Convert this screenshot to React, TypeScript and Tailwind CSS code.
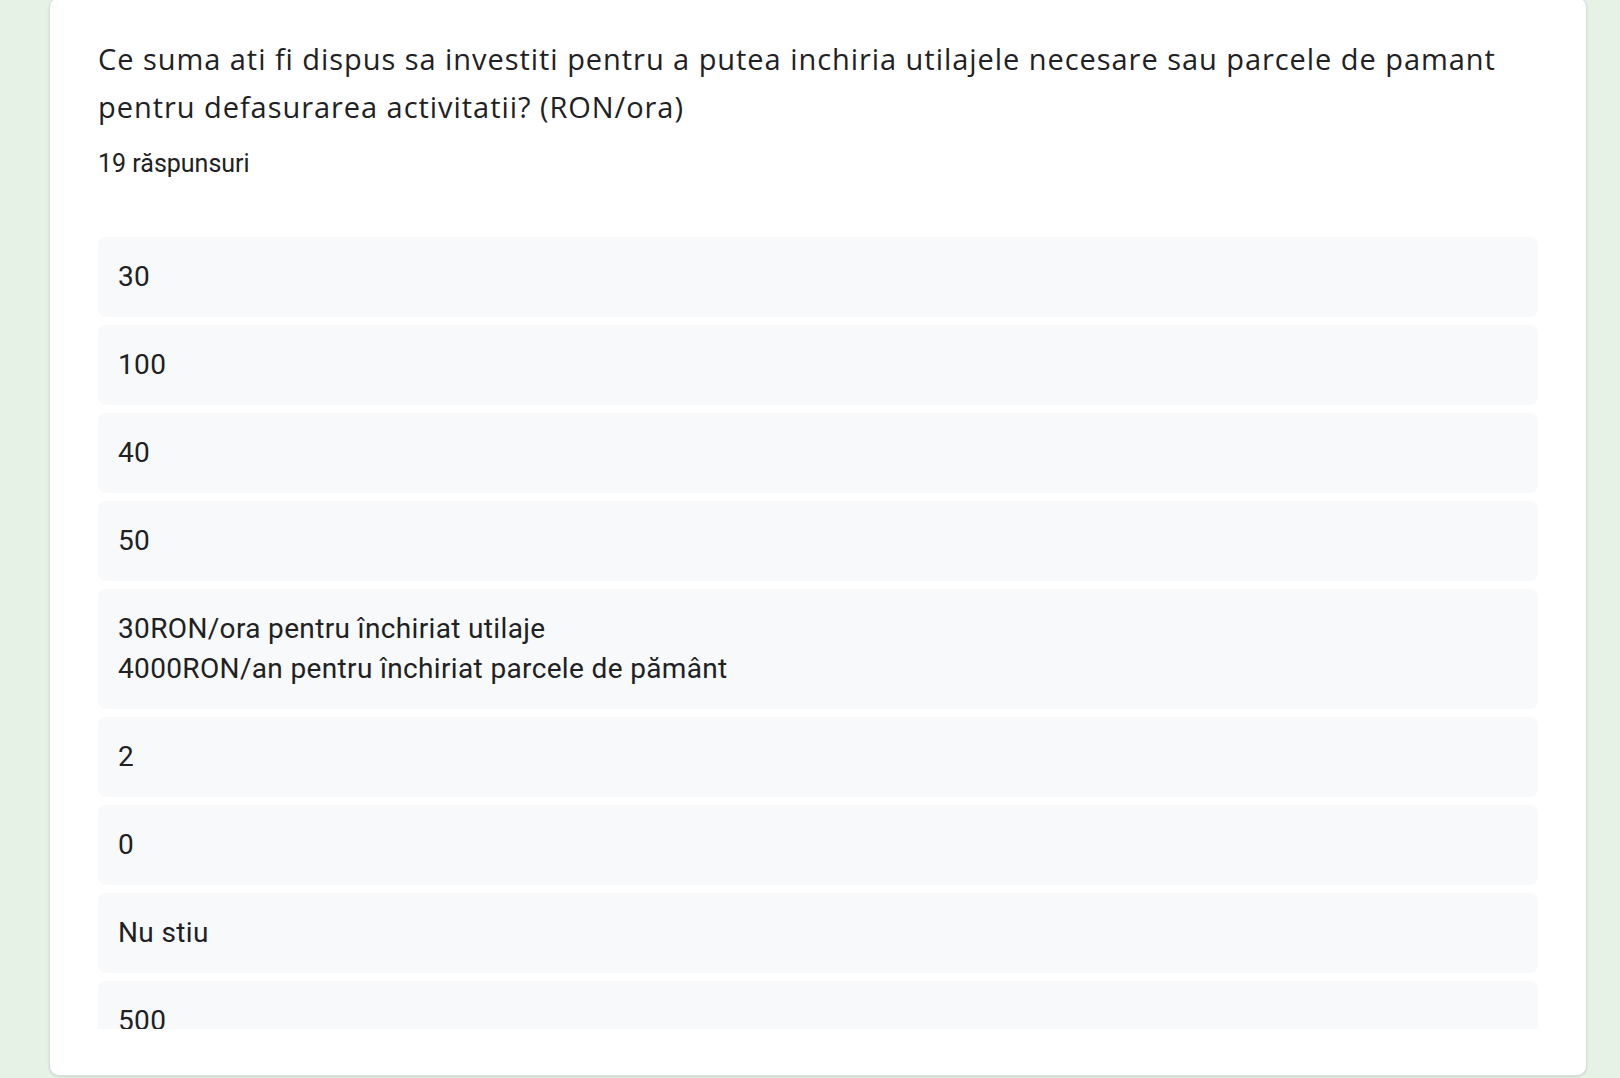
export default function App() {
  const answers = [
    "30",
    "100",
    "40",
    "50",
    "30RON/ora pentru închiriat utilaje\n4000RON/an pentru închiriat parcele de pământ",
    "2",
    "0",
    "Nu stiu",
    "500",
  ]

  return (
    <div className="min-h-screen h-[1078px] overflow-hidden bg-[#e6f2e5]">
      <div className="ml-[49px] w-[1538px] h-[1079px] -mt-[3px] rounded-[10px] border border-[#dadce0] bg-white px-12 pt-[37px] shadow-[0_1px_2px_rgba(60,64,67,0.15)]">
        {/* Question */}
        <h2 className="font-['Open_Sans',sans-serif] text-[29px] leading-[48px] tracking-[0.95px] text-[#202124]">
          Ce suma ati fi dispus sa investiti pentru a putea inchiria utilajele necesare sau parcele de pamant pentru defasurarea activitatii? (RON/ora)
        </h2>
        <div className="mt-[17px] font-['Roboto',sans-serif] text-[25px] leading-[32px] text-[#202124]">
          19 răspunsuri
        </div>

        {/* Answers */}
        <div className="mt-[57px] h-[792px] overflow-hidden flex flex-col gap-2">
          {answers.map((a, i) => (
            <div
              key={i}
              className="shrink-0 rounded-lg bg-[#f8f9fa] px-5 py-5 font-['Roboto',sans-serif] text-[28px] leading-[40px] tracking-[0.35px] text-[#202124] whitespace-pre-line"
            >
              {a}
            </div>
          ))}
        </div>
      </div>
    </div>
  )
}
